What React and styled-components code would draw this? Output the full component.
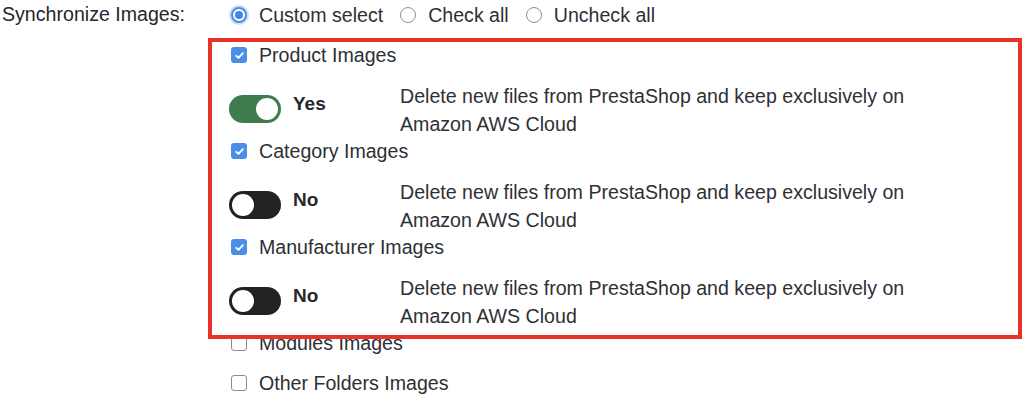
import styled, { createGlobalStyle } from "styled-components";

const GlobalStyle = createGlobalStyle`
  body {
    margin: 0;
    background: #ffffff;
    font-family: "Liberation Sans", Arial, sans-serif;
  }
`;

// Page
const Page = styled.div`
  position: relative;
  display: grid;
  grid-template-columns: 231px 1fr;
  padding-top: 1px;
  height: 399px;
  overflow: hidden;
  font-size: 19.6px;
  color: #2e3035;
`;

// Label
const Label = styled.div`
  padding-left: 2px;
  line-height: 26px;
  color: #25272c;
`;

// Options
const Options = styled.div`
  display: flex;
  flex-direction: column;
`;

const RadioRow = styled.div`
  display: flex;
  align-items: center;
  height: 28px;
  margin-bottom: 12px;
`;

const RadioOption = styled.label`
  display: flex;
  align-items: center;
  gap: 12px;
  margin-right: 17px;
`;

const Radio = styled.span`
  position: relative;
  box-sizing: border-box;
  width: 16px;
  height: 16px;
  border-radius: 50%;
  border: ${(p) => (p.$checked ? "2px solid #4a8ee6" : "1px solid #8f8f8f")};
  box-shadow: ${(p) => (p.$checked ? "0 0 0 2px #c9def8" : "none")};
  background: #fff;

  &::after {
    content: "";
    display: ${(p) => (p.$checked ? "block" : "none")};
    position: absolute;
    top: 2px;
    left: 2px;
    width: 8px;
    height: 8px;
    border-radius: 50%;
    background: #3f86e4;
  }
`;

const CheckRow = styled.label`
  display: flex;
  align-items: center;
  gap: 12px;
  height: 28px;
  margin-bottom: 12px;
`;

const Box = styled.span`
  box-sizing: border-box;
  display: flex;
  align-items: center;
  justify-content: center;
  width: 16px;
  height: 16px;
  border-radius: 3px;
  border: ${(p) => (p.$checked ? "none" : "1.5px solid #8a8a8a")};
  background: ${(p) => (p.$checked ? "#4a8ee8" : "#fff")};
`;

// margin-top collapses with the checkbox row's 12px, so 13px gives 13px
const ToggleRow = styled.div`
  display: flex;
  align-items: flex-start;
  margin: 13px 0 -1px;
`;

const Switch = styled.span`
  position: relative;
  flex-shrink: 0;
  width: 52px;
  height: 28px;
  margin: 13px 0 0 -2px;
  border-radius: 14px;
  background: ${(p) => (p.$on ? "#3e7b4d" : "#222222")};

  &::after {
    content: "";
    position: absolute;
    top: 3px;
    left: ${(p) => (p.$on ? "27px" : "3px")};
    width: 22px;
    height: 22px;
    border-radius: 50%;
    background: #ffffff;
  }
`;

const State = styled.span`
  width: 107px;
  margin: 8px 0 0 12px;
  line-height: 28px;
  font-weight: 700;
  font-size: 19px;
  color: #26282d;
`;

const Desc = styled.p`
  margin: 0;
  max-width: 540px;
  line-height: 28px;
`;

// red annotation frame lying over the list
const Highlight = styled.div`
  position: absolute;
  left: 208px;
  top: 38px;
  width: 814px;
  height: 301px;
  box-sizing: border-box;
  border: 4px solid #e8332a;
  pointer-events: none;
`;

const Tick = () => (
  <svg width="11" height="11" viewBox="0 0 12 12">
    <path d="M2.5 6.3l2.4 2.4 4.8-5.2" fill="none" stroke="#fff" strokeWidth="2" strokeLinecap="round" strokeLinejoin="round" />
  </svg>
);

const Check = ({ checked, children }) => (
  <CheckRow>
    <Box $checked={checked}>{checked && <Tick />}</Box>
    {children}
  </CheckRow>
);

const Toggle = ({ on }) => (
  <ToggleRow>
    <Switch $on={on} />
    <State>{on ? "Yes" : "No"}</State>
    <Desc>Delete new files from PrestaShop and keep exclusively on Amazon AWS Cloud</Desc>
  </ToggleRow>
);

const groups = [
  { name: "Product Images", checked: true, toggle: true },
  { name: "Category Images", checked: true, toggle: false },
  { name: "Manufacturer Images", checked: true, toggle: false },
  { name: "Modules Images", checked: false },
  { name: "Other Folders Images", checked: false },
];

export default function App() {
  return (
    <>
      <GlobalStyle />
      <Page>
        <Label>Synchronize Images:</Label>
        <Options>
          <RadioRow>
            <RadioOption><Radio $checked />Custom select</RadioOption>
            <RadioOption><Radio />Check all</RadioOption>
            <RadioOption><Radio />Uncheck all</RadioOption>
          </RadioRow>
          {groups.map((g) => (
            <div key={g.name}>
              <Check checked={g.checked}>{g.name}</Check>
              {g.toggle !== undefined && <Toggle on={g.toggle} />}
            </div>
          ))}
        </Options>
        <Highlight />
      </Page>
    </>
  );
}
